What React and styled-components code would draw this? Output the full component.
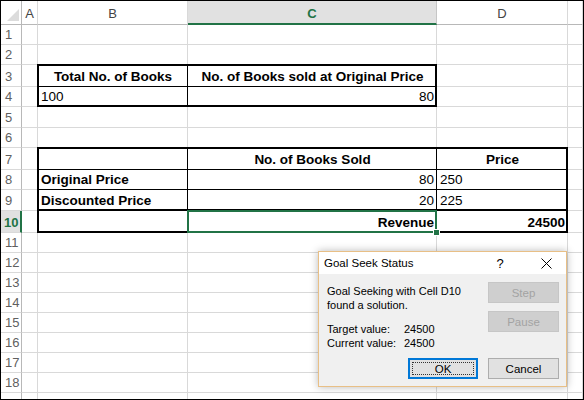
import React from 'react';
import styled, { createGlobalStyle, css } from 'styled-components';

const GlobalStyle = createGlobalStyle`
  html, body {
    margin: 0;
    padding: 0;
    background: #ffffff;
  }
`;

const GRID = '#d9d9d9';
const HEAD_LINE = '#b8b8b8';
const GREEN = '#217346';

// row 19 only peeks in at the bottom edge, so it gets no label
const rowHeights = [20, 20, 22, 20, 21, 20, 22, 20, 21, 22, 20, 20, 20, 20, 20, 20, 20, 20, 20];
const columns = ['A', 'B', 'C', 'D', 'E'];

const cells = {
  B3: { text: 'Total No. of Books', bold: true, align: 'center', edges: [2, 1, 1, 2] },
  C3: { text: 'No. of Books sold at Original Price', bold: true, align: 'center', edges: [2, 2, 1, 0] },
  B4: { text: '100', edges: [0, 1, 2, 2] },
  C4: { text: '80', align: 'right', edges: [0, 2, 2, 0] },
  B7: { edges: [2, 1, 1, 2] },
  C7: { text: 'No. of Books Sold', bold: true, align: 'center', edges: [2, 1, 1, 0] },
  D7: { text: 'Price', bold: true, align: 'center', edges: [2, 2, 1, 0] },
  B8: { text: 'Original Price', bold: true, edges: [0, 1, 1, 2] },
  C8: { text: '80', align: 'right', edges: [0, 1, 1, 0] },
  D8: { text: '250', edges: [0, 2, 1, 0] },
  B9: { text: 'Discounted Price', bold: true, edges: [0, 1, 2, 2] },
  C9: { text: '20', align: 'right', edges: [0, 1, 2, 0] },
  D9: { text: '225', edges: [0, 2, 2, 0] },
  B10: { edges: [0, 1, 2, 2] },
  C10: { text: 'Revenue', bold: true, align: 'right', edges: [0, 1, 2, 0], selected: true },
  D10: { text: '24500', bold: true, align: 'right', edges: [0, 2, 2, 0] },
};

const Frame = styled.div`
  position: relative;
  width: 584px;
  height: 400px;
  box-sizing: border-box;
  border: 1px solid #000;
  overflow: hidden;
  font-family: 'Liberation Sans', Arial, sans-serif;
`;

const Sheet = styled.div`
  display: grid;
  grid-template-columns: 21px 16px 150px 249px 131px 1fr;
  grid-template-rows: 24px ${rowHeights.map((h) => `${h}px`).join(' ')};
`;

const Corner = styled.div`
  display: flex;
  align-items: flex-end;
  justify-content: flex-end;
  padding: 0 2px 3px 0;
  box-sizing: border-box;
  border-right: 1px solid ${HEAD_LINE};
  border-bottom: 1px solid ${HEAD_LINE};
`;

const ColHeader = styled.div`
  display: flex;
  align-items: center;
  justify-content: center;
  padding-top: 2px;
  box-sizing: border-box;
  font-size: 13px;
  color: #444;
  background: #ffffff;
  border-right: 1px solid ${GRID};
  border-bottom: 1px solid ${HEAD_LINE};

  ${(p) =>
    p.$active &&
    css`
      background: #e1e1e1;
      color: ${GREEN};
      font-weight: bold;
      border-bottom: 2px solid ${GREEN};
      border-right-color: #c6c6c6;
    `}
`;

const RowHeader = styled.div`
  display: flex;
  align-items: flex-end;
  padding: 0 0 2px 4px;
  box-sizing: border-box;
  font-size: 13px;
  color: #5f5f5f;
  border-right: 1px solid ${HEAD_LINE};
  border-bottom: 1px solid ${GRID};

  ${(p) =>
    p.$active &&
    css`
      background: #e1e1e1;
      color: ${GREEN};
      font-weight: bold;
      padding-left: 3px;
      border-right: 2px solid ${GREEN};
    `}
`;

const Cell = styled.div`
  position: relative;
  display: flex;
  align-items: flex-end;
  justify-content: ${(p) =>
    p.$align === 'center' ? 'center' : p.$align === 'right' ? 'flex-end' : 'flex-start'};
  padding: 0 2px 2px 3px;
  box-sizing: border-box;
  font-size: 13.5px;
  font-weight: ${(p) => (p.$bold ? 'bold' : 'normal')};
  color: #000;
  white-space: nowrap;
  border-right: 1px solid ${GRID};
  border-bottom: 1px solid ${GRID};

  &::after {
    content: '';
    position: absolute;
    top: -1px;
    left: -1px;
    right: -1px;
    bottom: -1px;
    pointer-events: none;
    border-style: solid;
    border-color: ${(p) => (p.$selected ? GREEN : '#000')};
    border-width: ${(p) => (p.$selected ? '2px' : p.$edges.map((e) => `${e}px`).join(' '))};
    z-index: ${(p) => (p.$selected ? 2 : 1)};
  }
`;

const FillHandle = styled.span`
  position: absolute;
  right: -4px;
  bottom: -4px;
  width: 5px;
  height: 5px;
  background: ${GREEN};
  border: 1px solid #fff;
  z-index: 3;
`;

const Dialog = styled.div`
  position: absolute;
  left: 317px;
  top: 250px;
  width: 249px;
  height: 136px;
  box-sizing: border-box;
  border: 1px solid #e8bf86;
  background: #f0f0f0;
  box-shadow: 0 0 8px rgba(0, 0, 0, 0.28);
  display: flex;
  flex-direction: column;
  font-size: 11px;
  color: #000;
  z-index: 10;
`;

const TitleBar = styled.div`
  height: 22px;
  flex: none;
  display: flex;
  align-items: center;
  background: #ffffff;
  padding-left: 5px;
  font-size: 11.5px;
`;

const Title = styled.span`
  flex: 1;
`;

const TitleButton = styled.span`
  width: 30px;
  display: flex;
  align-items: center;
  justify-content: center;
  margin-right: ${(p) => p.$gap || 0}px;
  font-size: 13px;
`;

const Body = styled.div`
  flex: 1;
  display: flex;
  flex-direction: column;
  padding: 8px 7px 7px 8px;
`;

const TopRow = styled.div`
  display: flex;
  justify-content: space-between;
`;

const Message = styled.div`
  padding-top: 2px;
  line-height: 14px;
`;

const Values = styled.div`
  display: grid;
  grid-template-columns: 77px auto;
  margin-top: 10px;
  line-height: 14px;
`;

const ButtonColumn = styled.div`
  display: flex;
  flex-direction: column;
  gap: 8px;
`;

const Footer = styled.div`
  margin-top: auto;
  display: flex;
  justify-content: flex-end;
  gap: 10px;
`;

const Button = styled.div`
  position: relative;
  width: ${(p) => p.$w || 71}px;
  height: 21px;
  box-sizing: border-box;
  display: flex;
  align-items: center;
  justify-content: center;
  background: #e1e1e1;
  border: 1px solid #adadad;
  font-size: 11.5px;
  color: #000;

  ${(p) =>
    p.$disabled &&
    css`
      background: #cfcfcf;
      border-color: #c6c6c6;
      color: #a3a3a3;
    `}

  ${(p) =>
    p.$default &&
    css`
      border-color: #0078d7;
      box-shadow: inset 0 0 0 1px #0078d7;
      &::after {
        content: '';
        position: absolute;
        inset: 3px;
        border: 1px dotted #333;
      }
    `}
`;

const CloseIcon = () => (
  <svg width="11" height="11" viewBox="0 0 11 11">
    <path d="M0.5 0.5 L10.5 10.5 M10.5 0.5 L0.5 10.5" stroke="#000" strokeWidth="1" fill="none" />
  </svg>
);

const CornerMark = () => (
  <svg width="12" height="12" viewBox="0 0 12 12">
    <polygon points="12,0 12,12 0,12" fill="#dcdcdc" />
  </svg>
);

const App = () => {
  return (
    <Frame>
      <GlobalStyle />
      <Sheet>
        <Corner>
          <CornerMark />
        </Corner>
        {columns.map((c) => (
          <ColHeader key={c} $active={c === 'C'}>
            {c === 'E' ? '' : c}
          </ColHeader>
        ))}
        {rowHeights.map((_, i) => {
          const r = i + 1;
          return (
            <React.Fragment key={r}>
              <RowHeader $active={r === 10}>{r < 19 ? r : ''}</RowHeader>
              {columns.map((c) => {
                const data = cells[`${c}${r}`];
                return (
                  <Cell
                    key={c}
                    $align={data?.align}
                    $bold={data?.bold}
                    $edges={data?.edges || [0, 0, 0, 0]}
                    $selected={data?.selected}
                  >
                    {data?.text}
                    {data?.selected && <FillHandle />}
                  </Cell>
                );
              })}
            </React.Fragment>
          );
        })}
      </Sheet>

      <Dialog>
        <TitleBar>
          <Title>Goal Seek Status</Title>
          <TitleButton $gap={16}>?</TitleButton>
          <TitleButton $gap={5}>
            <CloseIcon />
          </TitleButton>
        </TitleBar>
        <Body>
          <TopRow>
            <Message>
              <div>Goal Seeking with Cell D10</div>
              <div>found a solution.</div>
              <Values>
                <span>Target value:</span>
                <span>24500</span>
                <span>Current value:</span>
                <span>24500</span>
              </Values>
            </Message>
            <ButtonColumn>
              <Button $disabled>Step</Button>
              <Button $disabled>Pause</Button>
            </ButtonColumn>
          </TopRow>
          <Footer>
            <Button $w={70} $default>
              OK
            </Button>
            <Button>Cancel</Button>
          </Footer>
        </Body>
      </Dialog>
    </Frame>
  );
};

export default App;
